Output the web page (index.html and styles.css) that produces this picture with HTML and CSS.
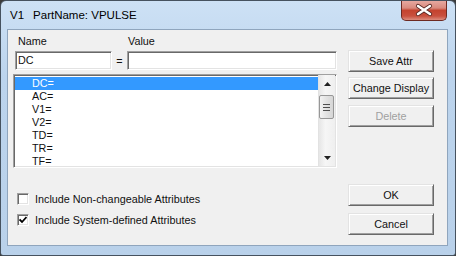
FILE: index.html
```html
<!DOCTYPE html>
<html lang="en">
  <head>
    <meta charset="UTF-8" />
    <title>V1 PartName: VPULSE</title>
    <link rel="stylesheet" href="styles.css">
  </head>
  <body>
    <div class="window">
      <div class="titlebar">
        <span class="title"><span class="ref">V1</span>PartName: VPULSE</span>
        <div class="close">
          <svg width="44" height="18" viewBox="0 0 44 18">
            <path d="M16 5 L28 13 M28 5 L16 13" stroke="#5b2b26" stroke-width="4.2" stroke-linecap="round" />
            <path d="M16 5 L28 13 M28 5 L16 13" stroke="#ffffff" stroke-width="2.4" stroke-linecap="round" />
          </svg>
        </div>
      </div>

      <div class="client">
        <div class="left">
          <div class="labels">
            <span>Name</span>
            <span>Value</span>
          </div>
          <div class="fields">
            <div class="field name-field">DC</div>
            <span class="eq">=</span>
            <div class="field value-field"></div>
          </div>

          <div class="listbox">
            <ul class="items">
              <li class="selected">DC=</li>
              <li>AC=</li>
              <li>V1=</li>
              <li>V2=</li>
              <li>TD=</li>
              <li>TR=</li>
              <li>TF=</li>
            </ul>
            <div class="scrollbar">
              <div class="arrow">
                <svg width="7" height="4" viewBox="0 0 7 4"><path d="M0 4 L3.5 0 L7 4 Z" fill="#222" /></svg>
              </div>
              <div class="thumb">
                <span class="grip"></span>
                <span class="grip"></span>
                <span class="grip"></span>
              </div>
              <div class="arrow down">
                <svg width="7" height="4" viewBox="0 0 7 4"><path d="M0 0 L3.5 4 L7 0 Z" fill="#222" /></svg>
              </div>
            </div>
          </div>

          <div class="checks">
            <label class="check"><span class="box"></span>Include Non-changeable Attributes</label>
            <label class="check">
              <span class="box">
                <svg width="8" height="8" viewBox="0 0 8 8"><path d="M0.5 3.5 L3 6 L7.5 1" fill="none" stroke="#000" stroke-width="1.8" /></svg>
              </span>
              Include System-defined Attributes
            </label>
          </div>
        </div>

        <div class="right">
          <button class="btn btn-save">Save Attr</button>
          <button class="btn btn-display">Change Display</button>
          <button class="btn btn-delete" disabled>Delete</button>
          <button class="btn btn-ok">OK</button>
          <button class="btn btn-cancel">Cancel</button>
        </div>
      </div>
    </div>
  </body>
</html>
```

FILE: styles.css
```css
* {
  box-sizing: border-box;
}

body {
  margin: 0;
  background: #3c3c3c;
  font-family: "Liberation Sans", Arial, sans-serif;
  font-size: 10.8px;
  color: #111111;
}

.window {
  width: 456px;
  height: 256px;
  border: 1px solid #46525f;
  border-radius: 6px 6px 3px 3px;
  background: linear-gradient(#cde1f5 0%, #bcd4ed 30%, #b9d1ea 100%);
  display: flex;
  flex-direction: column;
  overflow: hidden;
}

.titlebar {
  height: 28px;
  display: flex;
  align-items: flex-start;
  padding-left: 9px;
}

.title {
  padding-top: 8px;
  line-height: 13px;
  font-size: 11.5px;
  color: #000000;
}

.title .ref {
  margin-right: 9px;
}

.close {
  margin-left: auto;
  margin-right: 8px;
  margin-top: -1px;
  width: 46px;
  height: 21px;
  border: 1px solid #6d2a22;
  border-top: none;
  border-radius: 0 0 5px 5px;
  background: linear-gradient(#e8aca4 0%, #d98a7e 40%, #c4432f 52%, #c9503e 80%, #dc8c7e 100%);
  display: flex;
  align-items: center;
  justify-content: center;
}

.client {
  flex: 1;
  margin: 0 7px 9px 6px;
  border: 1px solid #8fa5bd;
  background: #f0f0f0;
  display: flex;
  padding-left: 5px;
}

.left {
  width: 324px;
  display: flex;
  flex-direction: column;
}

.labels {
  display: grid;
  grid-template-columns: 110px 1fr;
  height: 13px;
  line-height: 13px;
  margin-top: 5px;
  padding-left: 5px;
}

.fields {
  display: flex;
  margin-top: 3px;
  height: 19px;
  align-items: center;
}

.field {
  height: 19px;
  background: #ffffff;
  border: 1px solid;
  border-color: #a0a0a0 #ffffff #ffffff #a0a0a0;
  box-shadow: inset 1px 1px #696969, inset -1px -1px #e3e3e3;
  padding-left: 2px;
  line-height: 17px;
}

.name-field {
  margin-left: 2px;
  width: 97px;
}

.eq {
  width: 15px;
  text-align: center;
}

.value-field {
  width: 210px;
}

.listbox {
  margin-top: 4px;
  height: 94px;
  display: flex;
  background: #ffffff;
  border: 1px solid;
  border-color: #a0a0a0 #ffffff #ffffff #a0a0a0;
  box-shadow: inset 1px 1px #696969, inset -1px -1px #e3e3e3;
}

.items {
  flex: 1;
  list-style: none;
  margin: 0;
  padding: 2px 0 0 1px;
  overflow: hidden;
}

.items li {
  height: 13px;
  line-height: 13px;
  padding-left: 17px;
}

.items li.selected {
  background: #3399ff;
  color: #ffffff;
}

.scrollbar {
  width: 17px;
  margin: 0 1px 1px 0;
  background: linear-gradient(to right, #e6e6e6, #f6f6f6 40%, #efefef);
  border-left: 1px solid #e2e2e2;
  display: flex;
  flex-direction: column;
}

.arrow {
  height: 18px;
  display: flex;
  align-items: center;
  justify-content: center;
}

.arrow.down {
  margin-top: auto;
  height: 17px;
}

.thumb {
  margin: 2px 1px 0 0;
  height: 24px;
  border: 1px solid #979797;
  border-radius: 2px;
  background: linear-gradient(to right, #f3f3f3, #e2e2e2 50%, #d6d6d6);
  display: flex;
  flex-direction: column;
  align-items: center;
  justify-content: center;
  gap: 2px;
}

.grip {
  width: 7px;
  height: 1px;
  background: #4f4f4f;
}

.checks {
  margin-top: 25px;
  display: flex;
  flex-direction: column;
  gap: 9px;
}

.check {
  display: flex;
  align-items: center;
  height: 12px;
}

.box {
  width: 12px;
  height: 12px;
  margin-left: 4px;
  margin-right: 6px;
  background: #ffffff;
  border: 1px solid;
  border-color: #a0a0a0 #ffffff #ffffff #a0a0a0;
  box-shadow: inset 1px 1px #696969, inset -1px -1px #e3e3e3;
  display: flex;
  align-items: center;
  justify-content: center;
}

.right {
  margin-left: 11px;
  width: 86px;
  padding-top: 20px;
  display: flex;
  flex-direction: column;
}

.btn {
  height: 22px;
  padding: 0;
  font-family: "Liberation Sans", Arial, sans-serif;
  font-size: 10.8px;
  color: #111111;
  background: #f0f0f0;
  border: 1px solid;
  border-color: #e3e3e3 #696969 #696969 #e3e3e3;
  box-shadow: inset 1px 1px #ffffff, inset -1px -1px #a0a0a0;
}

.btn:disabled {
  color: #a0a0a0;
}

.btn-display {
  margin-top: 5px;
}

.btn-delete {
  margin-top: 6px;
}

.btn-ok {
  margin-top: 57px;
}

.btn-cancel {
  margin-top: 7px;
}
```
